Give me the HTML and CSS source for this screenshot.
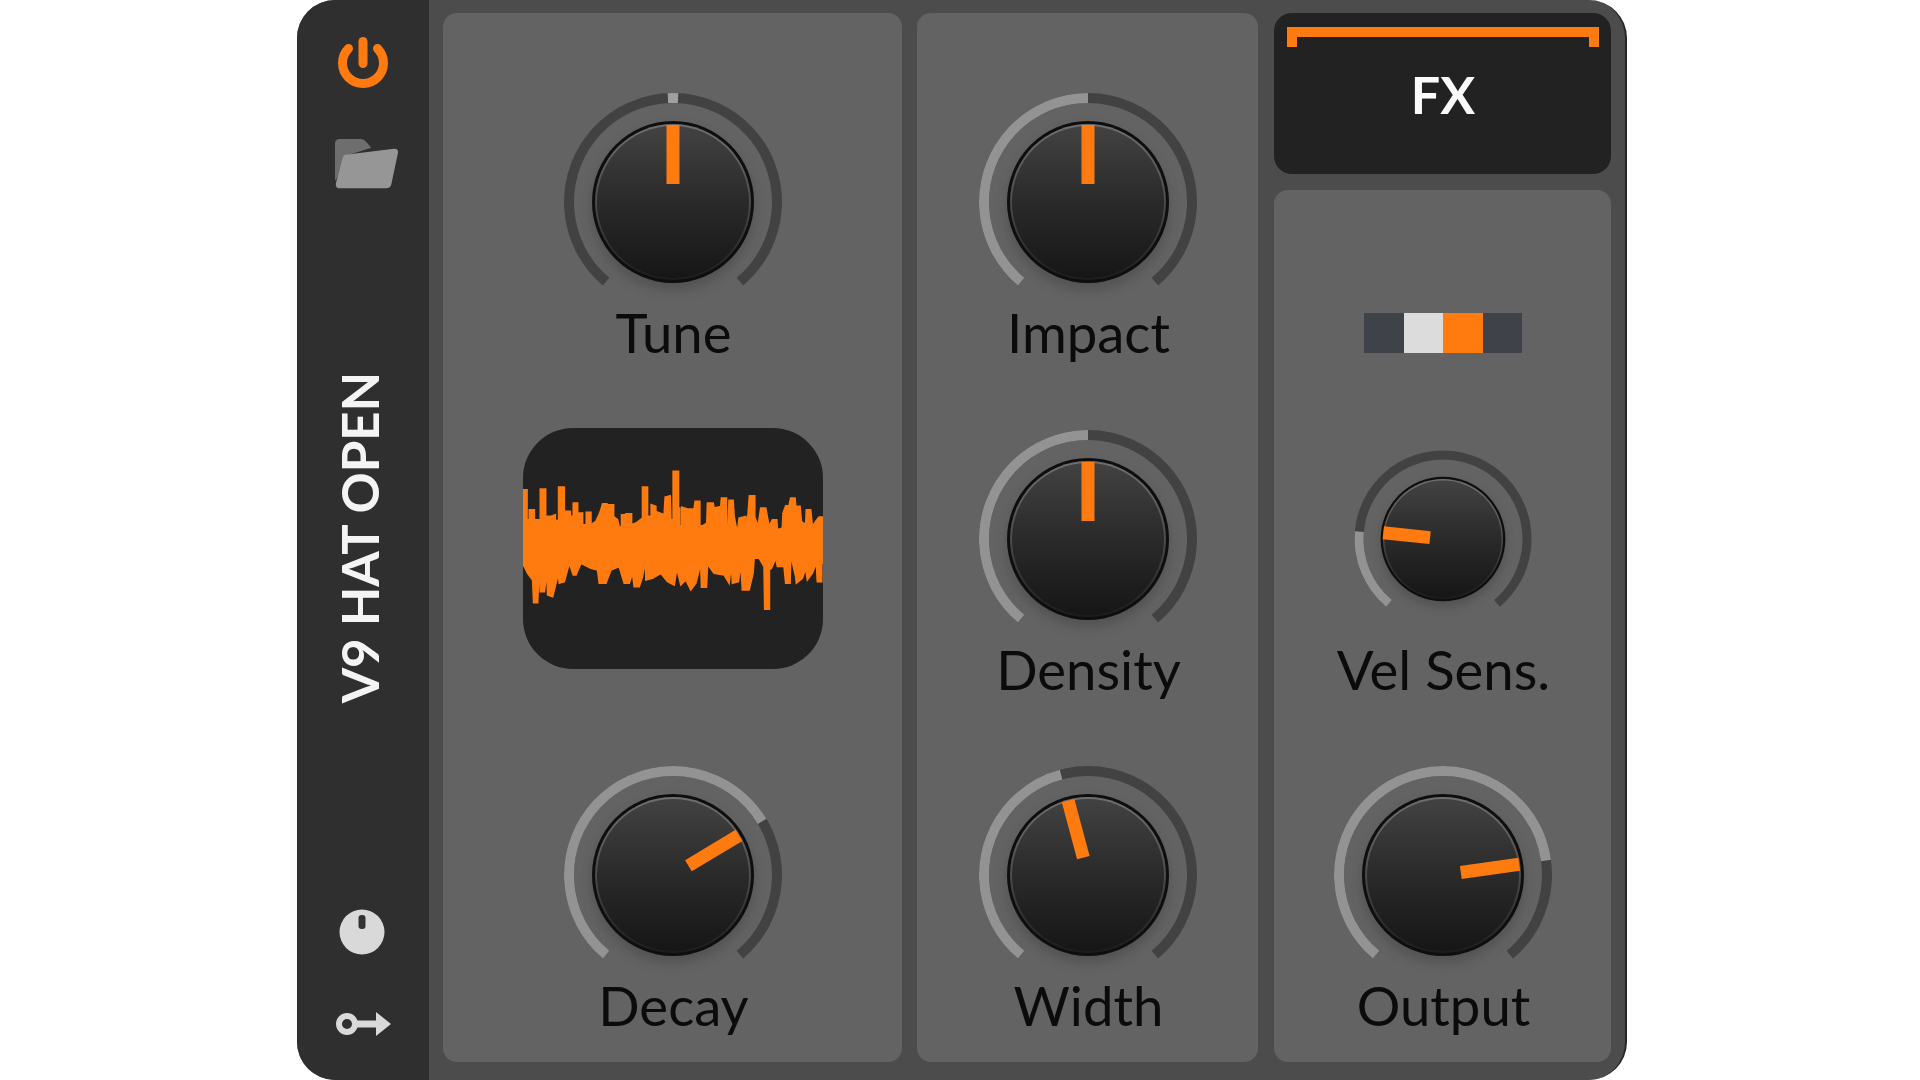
FILE: index.html
```html
<!DOCTYPE html>
<html>
<head><meta charset="utf-8"><title>V9 Hat Open</title>
<link rel="stylesheet" href="styles.css">
</head>
<body>

<svg class="defs">
 <defs>
  <linearGradient id="capfill" x1="0" y1="0" x2="0" y2="1">
   <stop offset="0" stop-color="#424242"/><stop offset=".5" stop-color="#2a2a2a"/><stop offset="1" stop-color="#161616"/>
  </linearGradient>
  <linearGradient id="caprim" x1="0" y1="0" x2="0" y2="1">
   <stop offset="0" stop-color="#6f6f6f"/><stop offset=".45" stop-color="#505050"/><stop offset="1" stop-color="#1c1c1c"/>
  </linearGradient>
  <filter id="blur" x="-30%" y="-30%" width="160%" height="160%"><feGaussianBlur stdDeviation="6"/></filter>
  <g id="cap">
   <circle cx="0" cy="7" r="81" fill="#3c3c3c" opacity=".45" filter="url(#blur)"/>
   <circle r="81" fill="#0e0e0e"/>
   <circle r="78" fill="url(#caprim)"/>
   <circle r="76" fill="url(#capfill)"/>
  </g>
 </defs>
</svg>

<div class="plugin">
 <div class="side">
  <svg class="ico-power" width="54" height="54" viewBox="0 0 54 54">
   <path d="M12.500 12.500A20.500 20.500 0 1 0 41.500 12.500" fill="none" stroke="#ff7b10" stroke-width="9" stroke-linecap="round"/>
   <path d="M27 5.500V27.500" fill="none" stroke="#ff7b10" stroke-width="9" stroke-linecap="round"/>
  </svg>
  <svg class="ico-folder" width="64" height="50" viewBox="0 0 192 150">
   <path d="M3 14Q3 0 17 0H80Q88 0 94 6L112 26L36 50L6 124Q3 126 3 118Z" fill="#6e6e6e"/>
   <path d="M34 47L180 29Q193 28 192 41L172 136Q170 148 156 148H18Q3 148 6 132L26 56Q28 48 34 47Z" fill="#969696"/>
  </svg>
  <div class="title">V9 HAT OPEN</div>
  <svg class="ico-dial" width="46" height="46" viewBox="0 0 46 46">
   <circle cx="23" cy="23" r="22.500" fill="#d9d9d9"/>
   <rect x="19.500" y="6" width="7" height="14" rx="3" fill="#333"/>
  </svg>
  <svg class="ico-route" width="56" height="26" viewBox="0 0 56 26">
   <circle cx="12" cy="13" r="8" fill="none" stroke="#d9d9d9" stroke-width="6"/>
   <path d="M20 9.500H41V1L56 13L41 25V16.500H20Z" fill="#d9d9d9"/>
  </svg>
 </div>

 <div class="main">
  <div class="panel wide">
   <div class="cell">
    <svg class="knob" viewBox="0 0 230 222">
     <path class="track" d="M48.150 190.670A104 104 0 1 1 181.850 190.670"/>
     <path class="value tick" pathLength="280" stroke-dasharray="0 137.200 5.600 137.200" d="M48.150 190.670A104 104 0 1 1 181.850 190.670"/>
     <g transform="translate(115 111)"><use href="#cap"/><rect class="needle" x="-6.500" y="-77" width="13" height="59"/></g>
    </svg>
    <div class="label">Tune</div>
   </div>
   <div class="cell">
    <div class="wave">
     <svg width="300" height="241" viewBox="36 55 901 722" preserveAspectRatio="none">
      <polygon class="wave-line" points="36,240 48,240 48,330 55,330 55,300 70,300 70,330 88,330 88,238 104,238 104,320 115,320 125,318 133,315 133,332 143,332 143,232 160,232 160,345 165,345 165,305 178,305 178,320 187,320 187,280 200,280 200,340 205,310 215,310 215,345 222,345 222,378 226,378 226,308 240,308 240,345 255,335 262,320 270,300 275,282 288,282 288,350 292,350 292,285 308,285 308,320 320,330 325,352 332,352 332,315 345,315 345,312 362,312 362,345 375,340 395,325 395,232 410,232 410,320 417,320 417,388 421,388 421,285 435,290 435,305 460,315 463,262 478,258 480,330 487,330 487,185 503,185 503,295 507,295 507,348 513,348 513,292 530,298 550,298 553,275 567,275 567,345 572,350 588,340 590,280 607,280 610,295 630,290 632,265 647,265 647,345 652,345 655,272 667,272 670,320 675,345 680,370 685,325 705,320 710,340 716,258 732,258 732,322 742,350 750,295 765,295 775,350 785,330 798,330 800,360 815,355 817,310 825,288 835,288 840,265 853,265 855,290 868,290 872,335 885,345 887,300 900,300 905,350 915,335 925,322 937,322 937,460 933,460 933,515 920,515 917,458 905,490 890,510 885,475 875,505 857,520 855,500 840,435 838,520 825,520 820,470 800,470 795,445 782,475 776,480 776,598 762,598 760,470 745,445 730,445 727,490 715,540 695,540 690,460 683,515 665,520 662,460 655,520 640,495 610,490 592,465 592,420 587,532 572,532 570,460 555,520 540,540 525,510 510,525 498,475 490,525 470,515 450,490 425,505 405,510 405,450 395,500 385,530 370,530 365,490 355,520 340,520 325,470 300,480 285,520 265,520 260,480 240,475 210,460 195,495 187,495 175,460 160,515 145,520 142,490 125,560 110,555 108,485 100,545 88,545 85,455 80,578 68,578 65,510 50,490 36,462"/>
     </svg>
    </div>
   </div>
   <div class="cell">
    <svg class="knob" viewBox="0 0 230 222">
     <path class="track" d="M48.150 190.670A104 104 0 1 1 181.850 190.670"/>
     <path class="value" pathLength="280" stroke-dasharray="199 280" d="M48.150 190.670A104 104 0 1 1 181.850 190.670"/>
     <g transform="translate(115 111)"><use href="#cap"/><rect class="needle" transform="rotate(59)" x="-6.500" y="-77" width="13" height="59"/></g>
    </svg>
    <div class="label">Decay</div>
   </div>
  </div>

  <div class="panel narrow">
   <div class="cell">
    <svg class="knob" viewBox="0 0 230 222">
     <path class="track" d="M48.150 190.670A104 104 0 1 1 181.850 190.670"/>
     <path class="value" pathLength="280" stroke-dasharray="140 280" d="M48.150 190.670A104 104 0 1 1 181.850 190.670"/>
     <g transform="translate(115 111)"><use href="#cap"/><rect class="needle" x="-6.500" y="-77" width="13" height="59"/></g>
    </svg>
    <div class="label">Impact</div>
   </div>
   <div class="cell">
    <svg class="knob" viewBox="0 0 230 222">
     <path class="track" d="M48.150 190.670A104 104 0 1 1 181.850 190.670"/>
     <path class="value" pathLength="280" stroke-dasharray="140 280" d="M48.150 190.670A104 104 0 1 1 181.850 190.670"/>
     <g transform="translate(115 111)"><use href="#cap"/><rect class="needle" x="-6.500" y="-77" width="13" height="59"/></g>
    </svg>
    <div class="label">Density</div>
   </div>
   <div class="cell">
    <svg class="knob" viewBox="0 0 230 222">
     <path class="track" d="M48.150 190.670A104 104 0 1 1 181.850 190.670"/>
     <path class="value" pathLength="280" stroke-dasharray="125 280" d="M48.150 190.670A104 104 0 1 1 181.850 190.670"/>
     <g transform="translate(115 111)"><use href="#cap"/><rect class="needle" transform="rotate(-15)" x="-6.500" y="-77" width="13" height="59"/></g>
    </svg>
    <div class="label">Width</div>
   </div>
  </div>

  <div class="col">
   <div class="fx">
    <div class="bracket"></div>
    <div class="fx-name">FX</div>
   </div>
   <div class="panel last">
    <div class="swatches">
     <div class="sw sw-dark"></div><div class="sw sw-light"></div><div class="sw sw-on"></div><div class="sw sw-dark"></div>
    </div>
    <div class="cell">
     <svg class="knob" viewBox="0 0 230 222">
      <path class="track thin" d="M61 175.350A84 84 0 1 1 169 175.350"/>
      <path class="value thin" pathLength="280" stroke-dasharray="55 280" d="M61 175.350A84 84 0 1 1 169 175.350"/>
      <g transform="translate(115 111)"><use href="#cap" transform="scale(.77)"/><rect class="needle" transform="rotate(-84)" x="-6.500" y="-60" width="13" height="47"/></g>
     </svg>
     <div class="label">Vel Sens.</div>
    </div>
    <div class="cell">
     <svg class="knob" viewBox="0 0 230 222">
      <path class="track" d="M48.150 190.670A104 104 0 1 1 181.850 190.670"/>
      <path class="value" pathLength="280" stroke-dasharray="222 280" d="M48.150 190.670A104 104 0 1 1 181.850 190.670"/>
      <g transform="translate(115 111)"><use href="#cap"/><rect class="needle" transform="rotate(82)" x="-6.500" y="-77" width="13" height="59"/></g>
     </svg>
     <div class="label">Output</div>
    </div>
   </div>
  </div>
 </div>
</div>

</body>
</html>
```

FILE: styles.css
```css
html{font-family:"Lato","Liberation Sans",sans-serif}
body{margin:0;padding:0;background:#fff;overflow:hidden}
.defs{position:absolute;width:0;height:0}

.plugin{display:flex;box-sizing:border-box;width:1330px;height:1080px;margin-left:297px;background:#4c4c4c;border-radius:38px;border-right:2px solid #262626;overflow:hidden}

.side{display:flex;flex-direction:column;align-items:center;flex:none;width:132px;box-sizing:border-box;padding:36px 0 43px;background:#2f2f2f}
.ico-folder{display:block;margin-top:49px;margin-left:6px}
.title{writing-mode:vertical-rl;transform:rotate(180deg);margin-top:183px;margin-left:-6px;color:#f4f4f4;font-size:51px;font-weight:700;line-height:50px;white-space:nowrap}
.ico-dial{margin-top:auto;margin-right:2px}
.ico-route{margin-top:56px}

.main{display:flex;gap:15px;flex:1;padding:13px 14px 18px 14px;min-width:0}
.panel{display:grid;grid-template-rows:336.500px 336.500px 1fr;justify-items:center;box-sizing:border-box;padding-top:78px;background:#636363;border-radius:14px}
.wide{width:459px}
.narrow{width:341px}
.col{display:flex;flex-direction:column;gap:16px;flex:1;margin-left:1px}

.fx{display:flex;flex-direction:column;align-items:center;box-sizing:border-box;height:161px;padding:14px 12px 0 13px;background:#222;border-radius:18px}
.bracket{align-self:stretch;box-sizing:border-box;height:20px;border:10px solid #ff7b10;border-bottom:0}
.fx-name{margin-top:16px;color:#fafafa;font-size:52px;font-weight:700;line-height:62px}

.last{flex:1;padding-top:0;grid-template-rows:237.500px 336.500px 1fr}
.swatches{display:flex;height:40px;margin-top:123px;margin-left:1px}
.sw{width:39.500px}
.sw-dark{background:#3f4249}
.sw-light{background:#dcdcdc}
.sw-on{background:#ff7b10}

.cell{display:flex;flex-direction:column;align-items:center}
.knob{display:block;width:230px;height:222px}
.label{padding-left:2px;color:#0b0b0b;font-size:54.500px;line-height:38px;white-space:nowrap}

.track,.value{fill:none;stroke-width:10}
.track{stroke:#424242}
.value{stroke:#939393}
.thin{stroke-width:9}
.tick{stroke:#a0a0a0}
.needle{fill:#ff7b10}

.wave{width:300px;height:241px;background:#222;border-radius:50px;overflow:hidden}
.wave svg{display:block}
.wave-line{fill:#ff7b10;stroke:#ff7b10;stroke-width:5}
```
